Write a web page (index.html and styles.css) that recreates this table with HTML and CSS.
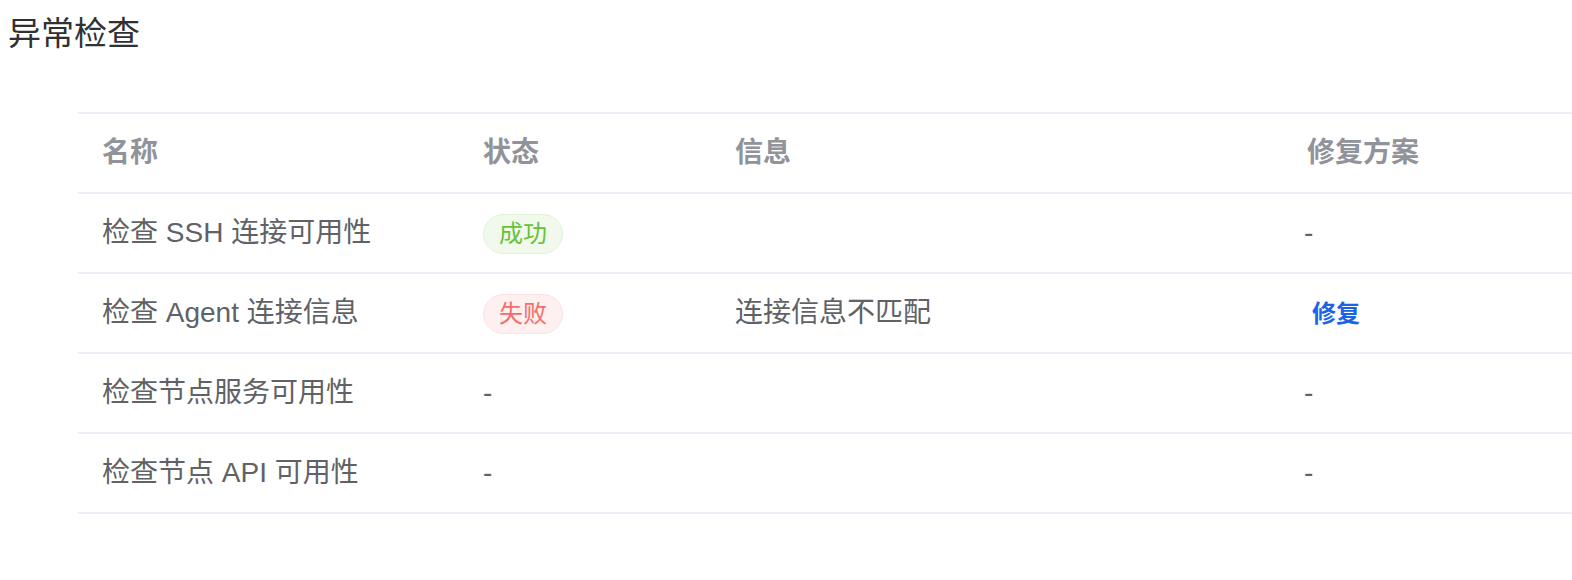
FILE: index.html
```html
<!DOCTYPE html>
<html lang="zh-CN">
<head>
<meta charset="utf-8">
<title>异常检查</title>
<link rel="stylesheet" href="styles.css">
</head>
<body>
<h2 class="title">异常检查</h2>
<div class="table-wrap">
  <table class="check-table">
    <colgroup>
      <col class="col-name">
      <col class="col-status">
      <col class="col-info">
      <col class="col-fix">
    </colgroup>
    <thead>
      <tr>
        <th>名称</th>
        <th>状态</th>
        <th>信息</th>
        <th>修复方案</th>
      </tr>
    </thead>
    <tbody>
      <tr>
        <td>检查 SSH 连接可用性</td>
        <td><span class="tag tag-success">成功</span></td>
        <td></td>
        <td>-</td>
      </tr>
      <tr>
        <td>检查 Agent 连接信息</td>
        <td><span class="tag tag-danger">失败</span></td>
        <td>连接信息不匹配</td>
        <td><button class="link-btn" type="button">修复</button></td>
      </tr>
      <tr>
        <td>检查节点服务可用性</td>
        <td>-</td>
        <td></td>
        <td>-</td>
      </tr>
      <tr>
        <td>检查节点 API 可用性</td>
        <td>-</td>
        <td></td>
        <td>-</td>
      </tr>
    </tbody>
  </table>
</div>
</body>
</html>
```

FILE: styles.css
```css
html, body {
  margin: 0;
  padding: 0;
  background: #ffffff;
}
body {
  padding: 8px;
  overflow: hidden;
  font-family: "Liberation Sans", "Noto Sans CJK SC", sans-serif;
}
.title {
  margin: 6px 0 0 0;
  font-size: 33px;
  line-height: 40px;
  font-weight: normal;
  color: #303133;
  font-family: "Liberation Sans", "Noto Sans CJK SC", sans-serif;
}
.table-wrap {
  margin: 58px -8px 0 70px;
}
.check-table {
  width: 100%;
  border-collapse: collapse;
  table-layout: fixed;
}
.col-name { width: 381px; }
.col-status { width: 252px; }
.col-info { width: 569px; }
.col-fix { width: 292px; }
.check-table thead tr {
  border-top: 2px solid #ebeef5;
}
.check-table tr {
  border-bottom: 2px solid #ebeef5;
}
.check-table th,
.check-table td {
  height: 78px;
  padding: 0 0 0 24px;
  text-align: left;
  vertical-align: middle;
  font-size: 28px;
  line-height: 40px;
  white-space: nowrap;
}
.check-table th {
  color: #909399;
  font-weight: bold;
}
.check-table th:last-child {
  padding-left: 27px;
}
.check-table td {
  color: #606266;
}
.tag {
  display: inline-block;
  box-sizing: border-box;
  height: 40px;
  padding: 0 15px;
  border: 1px solid;
  border-radius: 20px;
  font-size: 24px;
  line-height: 38px;
  vertical-align: middle;
}
.tag-success {
  background: #f0f9eb;
  border-color: #e1f3d8;
  color: #67c23a;
}
.tag-danger {
  background: #fef0f0;
  border-color: #fde2e2;
  color: #f56c6c;
}
.link-btn {
  border: 0;
  background: none;
  padding: 0 0 0 8px;
  margin: 0;
  font-family: "Liberation Sans", "Noto Sans CJK SC", sans-serif;
  font-size: 24px;
  font-weight: bold;
  color: #1a62e6;
  cursor: pointer;
  line-height: 40px;
}
```
